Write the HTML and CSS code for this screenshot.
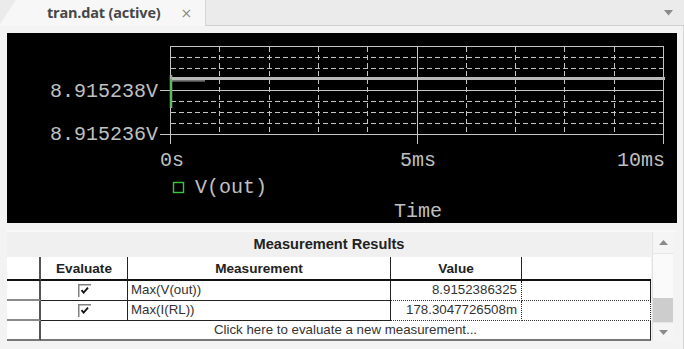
FILE: index.html
```html
<!DOCTYPE html>
<html>
<head>
<meta charset="utf-8">
<link rel="stylesheet" href="styles.css">
</head>
<body>
<div class="app">
  <div class="tabbar">
    <div class="tab">
      <span class="tab-title">tran.dat (active)</span>
      <span class="tab-close">×</span>
    </div>
    <div class="tabrest">
      <svg class="dropdown" width="9" height="6" viewBox="0 0 9 6"><path d="M0 0 H9 L4.5 5.5 Z" fill="#8a8a8a"/></svg>
    </div>
  </div>
  <div class="panel">
    <div class="plot">
      <svg width="670" height="190" viewBox="0 0 670 190">
        <g stroke="#c4c4c4" stroke-width="1" shape-rendering="crispEdges" fill="none">
          <line x1="163" y1="13.5" x2="657" y2="13.5"/>
          <line x1="153" y1="57.5" x2="657" y2="57.5"/>
          <line x1="153" y1="101.5" x2="657" y2="101.5"/>
          <line x1="163.5" y1="13" x2="163.5" y2="111"/>
          <line x1="410.5" y1="13" x2="410.5" y2="111"/>
          <line x1="656.5" y1="13" x2="656.5" y2="111"/>
          <g stroke-dasharray="5 3">
            <line x1="164" y1="24.5" x2="656" y2="24.5"/>
            <line x1="164" y1="35.5" x2="656" y2="35.5"/>
            <line x1="164" y1="68.5" x2="656" y2="68.5"/>
            <line x1="164" y1="79.5" x2="656" y2="79.5"/>
            <line x1="164" y1="90.5" x2="656" y2="90.5"/>
            <line x1="212.5" y1="14" x2="212.5" y2="101"/>
            <line x1="262.5" y1="14" x2="262.5" y2="101"/>
            <line x1="311.5" y1="14" x2="311.5" y2="101"/>
            <line x1="360.5" y1="14" x2="360.5" y2="101"/>
            <line x1="459.5" y1="14" x2="459.5" y2="101"/>
            <line x1="508.5" y1="14" x2="508.5" y2="101"/>
            <line x1="557.5" y1="14" x2="557.5" y2="101"/>
            <line x1="607.5" y1="14" x2="607.5" y2="101"/>
          </g>
        </g>
        <line x1="163" y1="45.5" x2="658" y2="45.5" stroke="#b8b8b8" stroke-width="3"/>
        <line x1="165" y1="47.8" x2="198" y2="47.8" stroke="#9a9a9a" stroke-width="1.2"/>
        <line x1="164" y1="42" x2="164" y2="75" stroke="#a8a8a8" stroke-width="2.5"/>
        <line x1="164" y1="46" x2="164" y2="74" stroke="#3fc43f" stroke-width="1.6"/>
        <g class="mono" fill="#c0c0c0">
          <text x="151" y="64" text-anchor="end">8.915238V</text>
          <text x="151" y="107" text-anchor="end">8.915236V</text>
          <text x="165" y="133" text-anchor="middle">0s</text>
          <text x="411" y="133" text-anchor="middle">5ms</text>
          <text x="658" y="133" text-anchor="end">10ms</text>
          <text x="188" y="160">V(out)</text>
          <text x="411" y="184" text-anchor="middle">Time</text>
        </g>
        <rect x="166.5" y="149.5" width="10" height="10" fill="none" stroke="#3fc43f" stroke-width="1.4"/>
      </svg>
    </div>
    <div class="results">
      <div class="grid">
        <div class="title">Measurement Results</div>
        <div class="h c1"></div>
        <div class="h">Evaluate</div>
        <div class="h">Measurement</div>
        <div class="h">Value</div>
        <div class="h last"></div>

        <div class="d c1"></div>
        <div class="d chk"><svg width="13" height="13" viewBox="0 0 13 13"><rect x="0" y="0" width="13" height="13" fill="#fff"/><path d="M0.75 13 V0.75 H13" fill="none" stroke="#808080" stroke-width="1.5"/><path d="M3.5 6.2 L5.6 8.6 L10 3.6" fill="none" stroke="#111" stroke-width="1.8"/></svg></div>
        <div class="d name">Max(V(out))</div>
        <div class="d val v1">8.9152386325</div>
        <div class="d ex1"></div>

        <div class="d c1"></div>
        <div class="d chk"><svg width="13" height="13" viewBox="0 0 13 13"><rect x="0" y="0" width="13" height="13" fill="#fff"/><path d="M0.75 13 V0.75 H13" fill="none" stroke="#808080" stroke-width="1.5"/><path d="M3.5 6.2 L5.6 8.6 L10 3.6" fill="none" stroke="#111" stroke-width="1.8"/></svg></div>
        <div class="d name">Max(I(RL))</div>
        <div class="d val v2">178.3047726508m</div>
        <div class="d ex2"></div>

        <div class="d c1 lastrow"></div>
        <div class="d newm lastrow">Click here to evaluate a new measurement...</div>
      </div>
      <div class="scrollbar">
        <div class="sbtn up"><svg width="9" height="5" viewBox="0 0 9 5"><path d="M0 5 H9 L4.5 0 Z" fill="#8a8a8a"/></svg></div>
        <div class="track"><div class="thumb"></div></div>
        <div class="sbtn down"><svg width="9" height="5" viewBox="0 0 9 5"><path d="M0 0 H9 L4.5 5 Z" fill="#8a8a8a"/></svg></div>
      </div>
    </div>
  </div>
</div>
</body>
</html>
```

FILE: styles.css
```css
* { box-sizing: border-box; }
html, body {
  margin: 0;
  padding: 0;
  width: 684px;
  height: 349px;
  overflow: hidden;
  background: #e9e9e9;
  font-family: "Liberation Sans", Arial, sans-serif;
}
.app {
  width: 684px;
  height: 349px;
  display: flex;
  flex-direction: column;
}
.tabbar {
  height: 26px;
  display: flex;
  background: #ebebeb;
}
.tab {
  width: 205px;
  background: #f7f7f7;
  clip-path: polygon(0 24px, 16px 0, 100% 0, 100% 100%, 0 100%);
  display: flex;
  align-items: center;
  padding-left: 47px;
  padding-bottom: 1px;
  gap: 20px;
}
.tab-title {
  font-family: "Open Sans", "Noto Sans", sans-serif;
  font-weight: 700;
  font-size: 14.5px;
  color: #474747;
  letter-spacing: -0.2px;
}
.tab-close {
  font-family: "DejaVu Sans", sans-serif;
  font-size: 14px;
  color: #8a8a8a;
}
.tabrest {
  flex: 1;
  border-left: 1px solid #d6d6d6;
  border-bottom: 1px solid #d0d0d0;
  display: flex;
  justify-content: flex-end;
  align-items: flex-start;
  padding-top: 10px;
  padding-right: 11px;
}
.panel {
  flex: 1;
  background: #f3f3f3;
  padding: 7px 7px 0 7px;
  border-right: 1px solid #d8d8d8;
}
.plot {
  width: 670px;
  height: 190px;
  background: #000;
}
.plot svg { display: block; }
.mono {
  font-family: "Liberation Mono", "Courier New", monospace;
  font-size: 20px;
}
.results {
  margin-top: 7px;
  border-top: 2px solid #f9f9f9;
  display: flex;
  gap: 1px;
  height: 111px;
}
.grid {
  width: 644px;
  display: grid;
  grid-template-columns: 34px 87px 263px 131px 129px;
  grid-template-rows: 25px 24px 20px 20px 20px;
  font-size: 13.3px;
  color: #333;
  background: #fff;
}
.title {
  grid-column: 1 / -1;
  background: #f0f0f0;
  font-weight: 700;
  font-size: 14.6px;
  color: #222;
  text-align: center;
  line-height: 25px;
}
.h {
  font-weight: 700;
  color: #222;
  text-align: center;
  line-height: 22px;
  font-size: 13.6px;
  border-right: 1px solid #222;
  border-bottom: 2px solid #111;
  padding-top: 1px;
}
.h.c1 { border-right: 2px solid #555; }
.h.last { border-right: none; }
.d {
  border-right: 1px solid #222;
  border-bottom: 1px solid #222;
  line-height: 18px;
  white-space: nowrap;
}
.d.c1 {
  border-right: 2px solid #555;
  border-bottom: 2px solid #8a8a8a;
}
.chk {
  display: flex;
  justify-content: center;
  align-items: center;
}
.chk svg { display: block; }
.name { padding-left: 3px; }
.val {
  text-align: right;
  padding-right: 4px;
  border-right: 1px dotted #222;
}
.v1 { border-bottom: 1px dotted #333; }
.ex1 {
  border-right: 1px solid #222;
  border-bottom: 1px dotted #333;
}
.v2 { border-bottom: 1px dotted #333; }
.ex2 {
  border-right: 1px dotted #222;
  border-bottom: 1px dotted #333;
}
.newm {
  grid-column: 2 / -1;
  text-align: center;
  border-right: 1px solid #222;
}
.lastrow { border-bottom: 2px solid #777; }
.d.c1.lastrow { border-bottom: 2px solid #777; }
.scrollbar {
  width: 21px;
  height: 109px;
  display: flex;
  flex-direction: column;
  background: #f7f7f7;
  border-left: 1px solid #e2e2e2;
}
.sbtn {
  height: 22px;
  display: flex;
  justify-content: center;
  align-items: center;
  background: #f5f5f5;
  border-bottom: 1px solid #e6e6e6;
}
.sbtn.down {
  height: 19px;
  border-bottom: none;
  border-top: 1px solid #e6e6e6;
}
.track {
  flex: 1;
  display: flex;
  flex-direction: column;
  justify-content: flex-end;
  background: #fafafa;
}
.thumb {
  height: 24px;
  background: #cdcdcd;
}
```
